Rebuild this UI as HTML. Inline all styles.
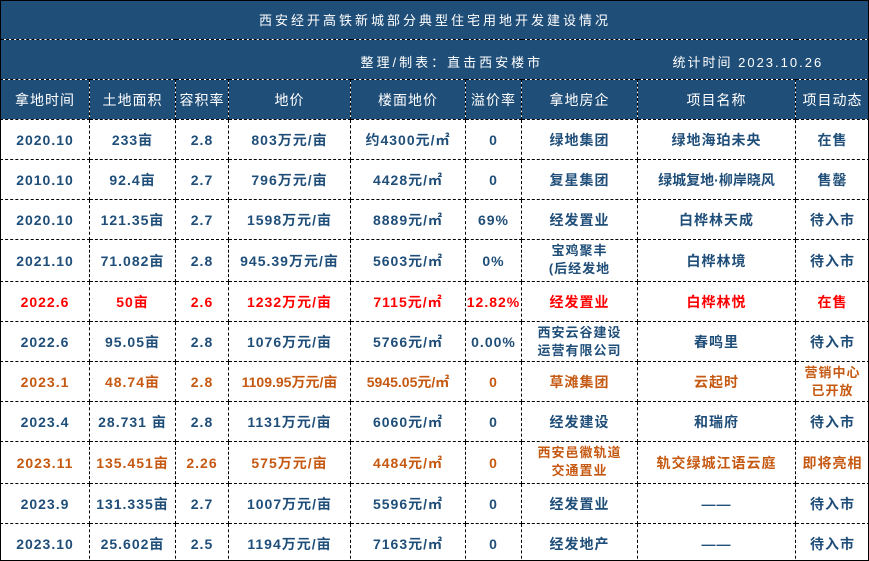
<!DOCTYPE html>
<html><head><meta charset="utf-8"><style>
body{margin:0;background:#fff;}
.w{position:absolute;left:0;top:0;width:867px;height:559px;border:1px solid #000;overflow:hidden;}
table{border-collapse:collapse;table-layout:fixed;width:869px;position:absolute;left:-1px;top:-1px;font-family:"Liberation Sans","Noto Sans CJK SC",sans-serif;font-weight:bold;font-size:14px;color:#1f4e79;}
td{border:1px dashed #000;height:39px;padding:0;text-align:center;vertical-align:middle;white-space:nowrap;overflow:hidden;letter-spacing:1px;}
.h td{background:#1f4e79;color:#fff;font-weight:normal;}
.t td{border:none;border-bottom:1px dashed #000;letter-spacing:3px;font-size:13px;}
.s td{border:none;font-size:13px;}
.r td{color:#f00;} .o td{color:#c65911;}
.sm{font-size:13px;line-height:18px;white-space:normal;}
</style></head><body><div class="w">
<table>
<colgroup><col style="width:89px"><col style="width:86px"><col style="width:53px"><col style="width:122px"><col style="width:115px"><col style="width:56px"><col style="width:116px"><col style="width:158px"><col style="width:74px"></colgroup>
<tr class="h t"><td colspan="9">西安经开高铁新城部分典型住宅用地开发建设情况</td></tr>
<tr class="h s"><td colspan="9" style="position:relative"><span style="position:absolute;left:360px;top:12px;letter-spacing:3px">整理/制表：直击西安楼市</span><span style="position:absolute;left:672px;top:12px;letter-spacing:2px">统计时间 2023.10.26</span></td></tr>
<tr class="h"><td>拿地时间</td><td>土地面积</td><td>容积率</td><td>地价</td><td>楼面地价</td><td>溢价率</td><td>拿地房企</td><td>项目名称</td><td>项目动态</td></tr>
<tr><td>2020.10</td><td>233亩</td><td>2.8</td><td>803万元/亩</td><td>约4300元/㎡</td><td>0</td><td>绿地集团</td><td>绿地海珀未央</td><td>在售</td></tr>
<tr><td>2010.10</td><td>92.4亩</td><td>2.7</td><td>796万元/亩</td><td>4428元/㎡</td><td>0</td><td>复星集团</td><td style="letter-spacing:0">绿城复地·柳岸晓风</td><td>售罄</td></tr>
<tr><td>2020.10</td><td>121.35亩</td><td>2.7</td><td>1598万元/亩</td><td>8889元/㎡</td><td>69%</td><td>经发置业</td><td>白桦林天成</td><td>待入市</td></tr>
<tr><td>2021.10</td><td>71.082亩</td><td>2.8</td><td>945.39万元/亩</td><td>5603元/㎡</td><td>0%</td><td class="sm" style="vertical-align:top;padding-top:2px">宝鸡聚丰<br>(后经发地</td><td>白桦林境</td><td>待入市</td></tr>
<tr class="r"><td>2022.6</td><td>50亩</td><td>2.6</td><td>1232万元/亩</td><td>7115元/㎡</td><td>12.82%</td><td>经发置业</td><td>白桦林悦</td><td>在售</td></tr>
<tr><td>2022.6</td><td>95.05亩</td><td>2.8</td><td>1076万元/亩</td><td>5766元/㎡</td><td>0.00%</td><td class="sm">西安云谷建设<br>运营有限公司</td><td>春鸣里</td><td>待入市</td></tr>
<tr class="o"><td>2023.1</td><td>48.74亩</td><td>2.8</td><td style="letter-spacing:0">1109.95万元/亩</td><td style="letter-spacing:0">5945.05元/㎡</td><td>0</td><td>草滩集团</td><td>云起时</td><td class="sm">营销中心<br>已开放</td></tr>
<tr><td>2023.4</td><td>28.731 亩</td><td>2.8</td><td>1131万元/亩</td><td>6060元/㎡</td><td>0</td><td>经发建设</td><td>和瑞府</td><td>待入市</td></tr>
<tr class="o"><td>2023.11</td><td>135.451亩</td><td>2.26</td><td>575万元/亩</td><td>4484元/㎡</td><td>0</td><td class="sm" style="vertical-align:top;padding-top:2px">西安邑徽轨道<br>交通置业</td><td>轨交绿城江语云庭</td><td>即将亮相</td></tr>
<tr><td>2023.9</td><td>131.335亩</td><td>2.7</td><td>1007万元/亩</td><td>5596元/㎡</td><td>0</td><td>经发置业</td><td>——</td><td>待入市</td></tr>
<tr><td>2023.10</td><td>25.602亩</td><td>2.5</td><td>1194万元/亩</td><td>7163元/㎡</td><td>0</td><td>经发地产</td><td>——</td><td>待入市</td></tr>
</table></div></body></html>
